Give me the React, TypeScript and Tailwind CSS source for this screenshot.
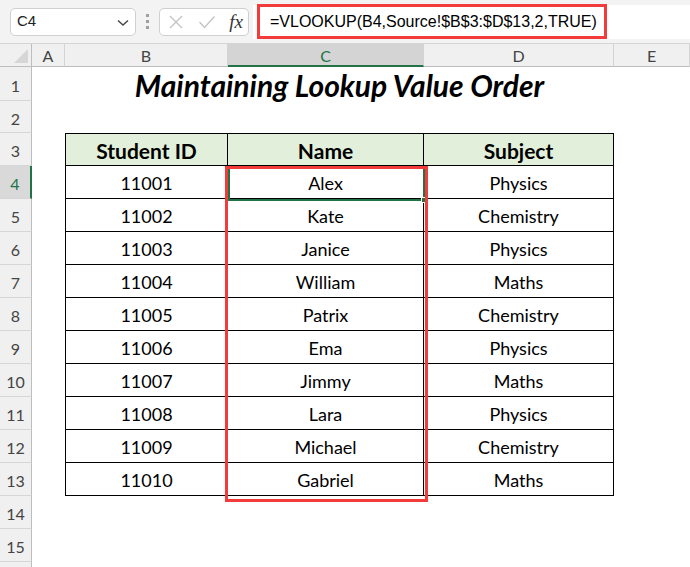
import React from 'react';

const students = [
  { id: '11001', name: 'Alex', subject: 'Physics' },
  { id: '11002', name: 'Kate', subject: 'Chemistry' },
  { id: '11003', name: 'Janice', subject: 'Physics' },
  { id: '11004', name: 'William', subject: 'Maths' },
  { id: '11005', name: 'Patrix', subject: 'Chemistry' },
  { id: '11006', name: 'Ema', subject: 'Physics' },
  { id: '11007', name: 'Jimmy', subject: 'Maths' },
  { id: '11008', name: 'Lara', subject: 'Physics' },
  { id: '11009', name: 'Michael', subject: 'Chemistry' },
  { id: '11010', name: 'Gabriel', subject: 'Maths' },
];

const columns = ['A', 'B', 'C', 'D', 'E'];
const rows = Array.from({ length: 16 }, (_, i) => i + 1);

const RowHeader: React.FC<{ n: number }> = ({ n }) => {
  const active = n === 4;
  return (
    <div
      className={`flex items-center justify-center pt-[4px] text-[16px] border-b border-[#d6d6d6] ${
        active
          ? 'bg-[#d9d9d9] text-[#217346] border-r-2 border-r-[#217346]'
          : 'bg-[#f0f0f0] text-[#444] border-r border-r-[#bdbdbd]'
      }`}
    >
      {n <= 15 ? n : ''}
    </div>
  );
};

const Cell: React.FC<{
  children?: React.ReactNode;
  head?: boolean;
  left?: boolean;
  top?: boolean;
}> = ({ children, head, left, top }) => (
  <div
    className={`flex items-center justify-center pt-[3px] border-r border-b border-black text-black ${
      left ? 'border-l' : ''
    } ${top ? 'border-t' : ''} ${head ? 'bg-[#e2efda] font-bold text-[21px]' : 'bg-white text-[18px]'}`}
  >
    {children}
  </div>
);

export default function App() {
  return (
    <div className="relative w-[690px] h-[567px] overflow-hidden bg-white font-['Lato',sans-serif]">
      {/* formula bar */}
      <div className="flex items-center h-[44px] bg-[#f3f3f3] border-b border-[#d4d4d4]">
        <div className="ml-[10px] w-[126px] h-[28px] bg-white border border-[#d0d0d0] rounded-[5px] flex items-center justify-between pl-[6px] pr-[6px]">
          <span className="text-[15px] text-[#222] font-['Liberation_Sans',sans-serif]">C4</span>
          <svg width="12" height="8" viewBox="0 0 12 8" className="mt-[2px]">
            <path d="M1 1.5 L6 6 L11 1.5" fill="none" stroke="#444" strokeWidth="1.4" />
          </svg>
        </div>
        <div className="mx-[10px] flex flex-col gap-[3px]">
          <span className="w-[3px] h-[3px] bg-[#a0a0a0]" />
          <span className="w-[3px] h-[3px] bg-[#a0a0a0]" />
          <span className="w-[3px] h-[3px] bg-[#a0a0a0]" />
        </div>
        <div className="w-[90px] h-[28px] bg-white border border-[#d0d0d0] rounded-[5px] flex items-center justify-between pl-[8px] pr-[5px]">
          <svg width="16" height="16" viewBox="0 0 16 16">
            <path d="M2 2 L14 14 M14 2 L2 14" stroke="#c4c4c4" strokeWidth="1.4" />
          </svg>
          <svg width="18" height="14" viewBox="0 0 18 14">
            <path d="M1.5 7 L6.5 12.5 L16.5 1.5" fill="none" stroke="#c4c4c4" strokeWidth="1.4" />
          </svg>
          <span className="font-['Liberation_Serif',serif] italic text-[19px] text-[#333] leading-none">
            fx
          </span>
        </div>
        <div className="ml-[4px] flex-1 h-[34px] bg-white flex items-center">
          <div className="ml-[4px] w-[350px] h-[35px] border-[3px] border-[#f23b3b] flex items-center pl-[10px] text-[16px] text-black font-['Liberation_Sans',sans-serif]">
            =VLOOKUP(B4,Source!$B$3:$D$13,2,TRUE)
          </div>
        </div>
      </div>

      {/* sheet */}
      <div className="grid grid-cols-[32px_33px_163px_196px_190px_76px] grid-rows-[23px_34px_32px_repeat(14,33px)]">
        {/* column headers */}
        <div className="relative bg-[#f0f0f0] border-r border-b border-[#bdbdbd]">
          <svg width="14" height="14" viewBox="0 0 14 14" className="absolute right-[3px] bottom-[3px]">
            <path d="M14 0 L14 14 L0 14 Z" fill="#d6d6d6" />
          </svg>
        </div>
        {columns.map((c) => (
          <div
            key={c}
            className={`flex items-center justify-center pt-[2px] text-[16px] border-r border-[#d4d4d4] ${
              c === 'C'
                ? 'bg-[#d4d4d4] text-[#217346] border-b-2 border-b-[#217346]'
                : 'bg-[#f0f0f0] text-[#444] border-b border-b-[#bdbdbd]'
            }`}
          >
            {c}
          </div>
        ))}

        {rows.map((n) => {
          const cells: React.ReactNode[] = [<RowHeader key={`h${n}`} n={n} />];
          if (n === 1) {
            cells.push(<div key="a1" />);
            cells.push(
              <div
                key="t"
                className="col-span-3 flex items-center justify-center pt-[2px] text-[30px] font-bold italic text-black"
              >
                Maintaining Lookup Value Order
              </div>
            );
            cells.push(<div key="e1" />);
          } else if (n === 3) {
            cells.push(<div key="a3" />);
            cells.push(
              <Cell key="b3" head left top>
                Student ID
              </Cell>
            );
            cells.push(
              <Cell key="c3" head top>
                Name
              </Cell>
            );
            cells.push(
              <Cell key="d3" head top>
                Subject
              </Cell>
            );
            cells.push(<div key="e3" />);
          } else if (n >= 4 && n <= 13) {
            const s = students[n - 4];
            cells.push(<div key={`a${n}`} />);
            cells.push(
              <Cell key={`b${n}`} left>
                {s.id}
              </Cell>
            );
            cells.push(<Cell key={`c${n}`}>{s.name}</Cell>);
            cells.push(<Cell key={`d${n}`}>{s.subject}</Cell>);
            cells.push(<div key={`e${n}`} />);
          } else {
            columns.forEach((c) => cells.push(<div key={`${c}${n}`} />));
          }
          return <React.Fragment key={n}>{cells}</React.Fragment>;
        })}
      </div>

      {/* active cell C4 */}
      <div className="absolute left-[228px] top-[166px] w-[197px] h-[35px] border-2 border-[#217346] pointer-events-none" />
      <div className="absolute left-[421px] top-[197px] w-[6px] h-[6px] bg-[#217346] border border-white" />

      {/* highlighted range */}
      <div className="absolute left-[225px] top-[166px] w-[203px] h-[336px] border-[3px] border-[#f23b3b] pointer-events-none" />
    </div>
  );
}
